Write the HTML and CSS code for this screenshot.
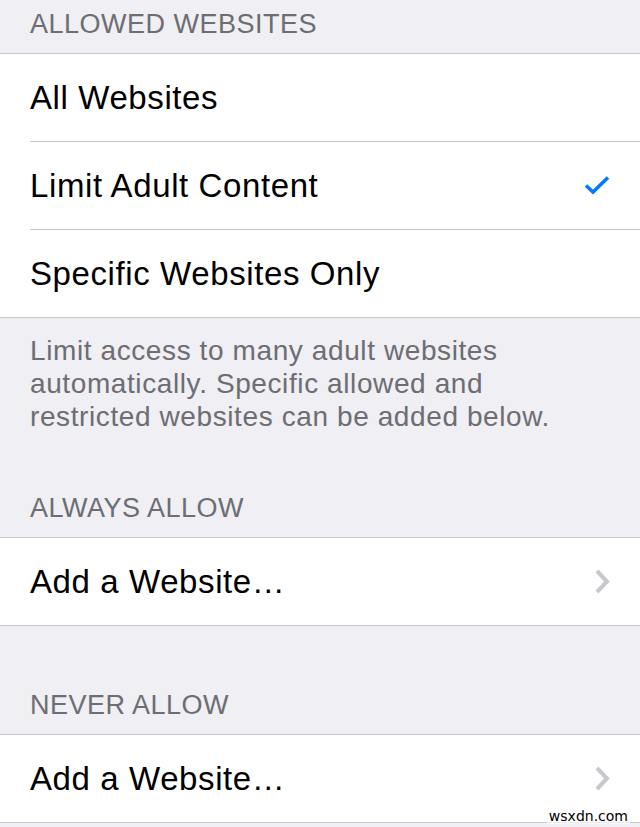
FILE: index.html
```html
<!DOCTYPE html>
<html>
<head>
<meta charset="utf-8">
<link rel="stylesheet" href="styles.css">
</head>
<body>
<div class="screen">
  <div class="section-header first">ALLOWED WEBSITES</div>
  <div class="group">
    <div class="row"><span class="label">All Websites</span></div>
    <div class="row"><span class="label">Limit Adult Content</span>
      <svg class="check" width="28" height="22" viewBox="0 0 28 22"><polyline points="3,10.5 10,17 25,2.5" fill="none" stroke="#007aff" stroke-width="3.6" stroke-linecap="butt" stroke-linejoin="miter"/></svg>
    </div>
    <div class="row"><span class="label">Specific Websites Only</span></div>
  </div>
  <div class="footer">Limit access to many adult websites<br>automatically. Specific allowed and<br>restricted websites can be added below.</div>
  <div class="section-header after-footer">ALWAYS ALLOW</div>
  <div class="group">
    <div class="row"><span class="label">Add a Website…</span>
      <svg class="chev" width="18" height="28" viewBox="0 0 18 28"><polyline points="3,3 13,13.5 3,24" fill="none" stroke="#c7c7cc" stroke-width="4"/></svg>
    </div>
  </div>
  <div class="section-header after-group">NEVER ALLOW</div>
  <div class="group">
    <div class="row"><span class="label">Add a Website…</span>
      <svg class="chev" width="18" height="28" viewBox="0 0 18 28"><polyline points="3,3 13,13.5 3,24" fill="none" stroke="#c7c7cc" stroke-width="4"/></svg>
    </div>
  </div>
  <div class="watermark">wsxdn.com</div>
</div>
</body>
</html>
```

FILE: styles.css
```css
* { box-sizing: border-box; }
html, body {
  margin: 0;
  padding: 0;
  background: #efeff4;
}
.screen {
  position: relative;
  width: 640px;
  height: 827px;
  overflow: hidden;
  font-family: "Liberation Sans", Arial, sans-serif;
  background: #efeff4;
}
.section-header {
  font-size: 27px;
  line-height: 28px;
  letter-spacing: 0.5px;
  color: #6d6d72;
  padding: 0 30px 15px 30px;
}
.section-header.first { padding-top: 10px; }
.section-header.after-footer { padding-top: 61px; }
.section-header.after-group { padding-top: 65px; }
.group {
  background: #fff;
  border-top: 1px solid #c8c7cc;
  border-bottom: 1px solid #c8c7cc;
}
.row {
  margin-left: 30px;
  padding-right: 30px;
  height: 88px;
  border-bottom: 1px solid #c8c7cc;
  display: flex;
  align-items: center;
  justify-content: space-between;
}
.row:last-child {
  border-bottom: none;
  height: 87px;
}
.label {
  font-size: 33px;
  line-height: 87px;
  letter-spacing: 0.6px;
  color: #000;
}
.check { margin-right: -1px; margin-top: 1px; }
.chev { margin-right: -2px; }
.footer {
  font-size: 28px;
  line-height: 33px;
  letter-spacing: 0.6px;
  color: #6d6d72;
  padding: 16px 30px 0 30px;
}
.watermark {
  position: absolute;
  right: 10px;
  bottom: 3px;
  font-family: "DejaVu Sans", sans-serif;
  font-size: 14px;
  line-height: 16px;
  color: #000;
  background: rgba(255,255,255,0.6);
  padding: 0 2px;
}
```
